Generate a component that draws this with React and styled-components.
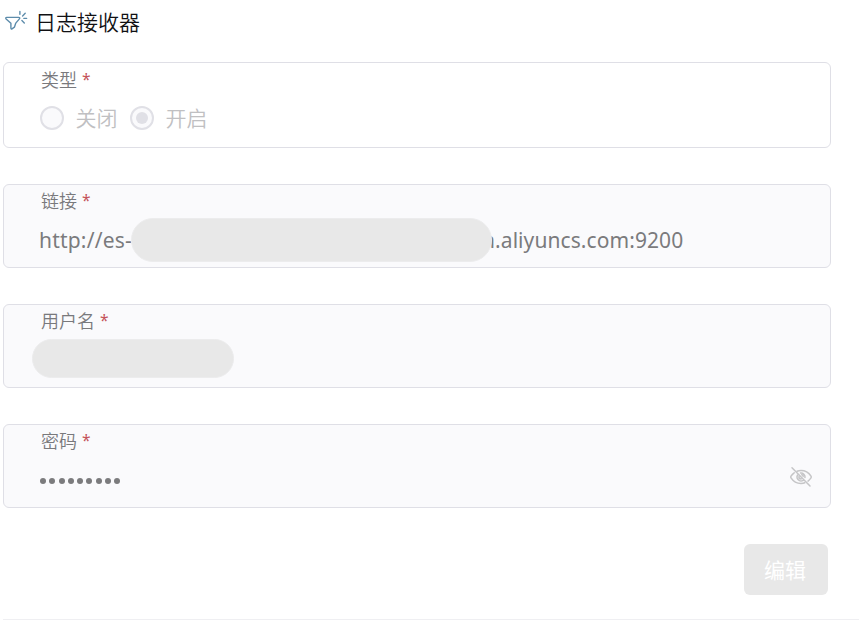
import React from "react";
import styled, { createGlobalStyle } from "styled-components";

const GlobalStyle = createGlobalStyle`
  *, *::before, *::after { box-sizing: border-box; }
  html, body { margin: 0; background: #fff; }
  body {
    overflow: hidden;
    font-family: "Noto Sans", "Noto Sans CJK SC", sans-serif;
  }
`;

const Page = styled.main`
  width: 859px;
  height: 623px;
  padding-left: 3px;
`;

const Header = styled.header`
  display: flex;
  align-items: flex-start;
  height: 62px;
`;

const HeaderIcon = styled.svg`
  width: 26px;
  height: 24px;
  margin: 9px 6px 0 0;
  fill: none;
  stroke: #5d8cab;
  stroke-width: 1.4;
  stroke-linecap: round;
  stroke-linejoin: round;
`;

const Title = styled.h1`
  margin: 6px 0 0;
  font: 350 21px/30px "Noto Sans CJK SC", sans-serif;
  color: #111114;
`;

const Form = styled.form`
  display: flex;
  flex-direction: column;
  gap: 36px;
  width: 828px;
`;

const Field = styled.div`
  position: relative;
  display: flex;
  flex-direction: column;
  height: ${(p) => (p.$plain ? 86 : 84)}px;
  padding: ${(p) => (p.$plain ? 3 : 2)}px 17px 0 37px;
  border: 1px solid #dfdfe6;
  border-radius: 6px;
  background: ${(p) => (p.$plain ? "#fff" : "#fafafc")};
`;

const Label = styled.label`
  display: flex;
  gap: 5px;
  height: 27px;
  font: 350 18px/27px "Noto Sans CJK SC", sans-serif;
  color: #79797c;
`;

const Required = styled.span`
  font-family: "Noto Sans", sans-serif;
  font-weight: 400;
  font-size: 15.5px;
  color: #c4525a;
`;

const Options = styled.div`
  display: flex;
  align-items: center;
  height: 50px;
  margin-left: -1px;
`;

const Option = styled.span`
  display: flex;
  align-items: center;
  gap: 11.5px;
  width: 90px;
  font: 350 21px/30px "Noto Sans CJK SC", sans-serif;
  color: #c0c0c2;
  white-space: nowrap;
`;

const OptionText = styled.span`
  margin-top: -2px;
`;

const Radio = styled.span`
  display: grid;
  place-items: center;
  width: 24px;
  height: 24px;
  border: 2px solid #e0e0e6;
  border-radius: 50%;
  background: #fafafc;

  &::after {
    content: "";
    width: 12px;
    height: 12px;
    border-radius: 50%;
    background: ${(p) => (p.$checked ? "#e0e0e6" : "transparent")};
  }
`;

const Value = styled.div`
  display: flex;
  align-items: center;
  height: 52px;
  margin-left: -2px;
  font-size: 21px;
  line-height: 30px;
  color: #7b7b7d;
`;

const UrlStart = styled.span`
  width: 443px;
  letter-spacing: 0.2px;
`;

const UrlEnd = styled.span`
  letter-spacing: 0.08px;
`;

const Mask = styled.span`
  position: absolute;
  left: ${(p) => p.$left}px;
  top: ${(p) => p.$top}px;
  width: ${(p) => p.$width}px;
  height: ${(p) => p.$height}px;
  border: 1px solid #ececed;
  border-radius: 22px;
  background: #e8e8e8;
`;

const PasswordRow = styled.div`
  display: flex;
  align-items: center;
  justify-content: space-between;
  height: 48px;
  margin-left: -1px;
`;

const Dots = styled.span`
  display: flex;
  gap: 3.3px;
  padding-top: 5px;
`;

const Dot = styled.i`
  width: 6px;
  height: 6px;
  border-radius: 50%;
  background: #7b7b7d;
`;

const EyeOff = styled.svg`
  width: 24px;
  height: 24px;
  margin-top: -3px;
  fill: none;
  stroke: #c5c5c7;
  stroke-width: 1.5;
  stroke-linecap: round;
  stroke-linejoin: round;
`;

const Actions = styled.div`
  display: flex;
  justify-content: flex-end;
  padding-right: 3px;
`;

const EditButton = styled.button`
  width: 84px;
  height: 51px;
  padding: 0 2px 2px 0;
  border: 0;
  border-radius: 6px;
  background: #e8e8e8;
  color: #fff;
  font: 400 21px/30px "Noto Sans CJK SC", sans-serif;
`;

const Divider = styled.hr`
  height: 1px;
  margin: 24px 0 0;
  border: 0;
  background: #efeff2;
`;

function FieldLabel({ children }) {
  return (
    <Label>
      {children}
      <Required>*</Required>
    </Label>
  );
}

export default function App() {
  return (
    <>
      <GlobalStyle />
      <Page>
        <Header>
          <HeaderIcon viewBox="0 0 26 24">
            <path d="M3.8 8.4H15.7C16.8 8.4 17.1 9.1 16.4 9.9L12.8 14.1L11.4 18.2L9 19.8C8.3 20.2 7.9 19.9 7.9 19.1V14.2L3.1 9.9C2.4 9.2 2.8 8.4 3.8 8.4Z" />
            <path d="M16.9 2.4V5.2M19.6 6.9L22.2 4.3M20.9 9.4H23.6M18.9 11.6L21.3 13.9" />
          </HeaderIcon>
          <Title>日志接收器</Title>
        </Header>
        <Form>
          <Field $plain>
            <FieldLabel>类型</FieldLabel>
            <Options>
              <Option><Radio /><OptionText>关闭</OptionText></Option>
              <Option><Radio $checked /><OptionText>开启</OptionText></Option>
            </Options>
          </Field>
          <Field>
            <FieldLabel>链接</FieldLabel>
            <Value>
              <UrlStart>http://es-</UrlStart>
              <UrlEnd>n.aliyuncs.com:9200</UrlEnd>
            </Value>
            <Mask $left={127} $top={33} $width={361} $height={44} />
          </Field>
          <Field>
            <FieldLabel>用户名</FieldLabel>
            <Mask $left={28} $top={34} $width={202} $height={39} />
          </Field>
          <Field>
            <FieldLabel>密码</FieldLabel>
            <PasswordRow>
              <Dots>
                {Array.from({ length: 9 }, (_, i) => <Dot key={i} />)}
              </Dots>
              <EyeOff viewBox="0 0 24 24">
                <path d="M8 6.3C9.2 5.8 10.5 5.5 12 5.5C17 5.5 20.3 8.5 22 11.1C22.4 11.7 22.4 12.3 22 12.9C21.2 14.1 20.2 15.2 19 16.1M15.8 17.8C14.7 18.3 13.4 18.5 12 18.5C7 18.5 3.7 15.5 2 12.9C1.6 12.3 1.6 11.7 2 11.1C2.8 9.9 3.9 8.7 5.2 7.8" />
                <path d="M11.5 8C14.1 7.7 16.3 9.9 16 12.5M8.6 10C7.4 12 8 14.2 10 15.4C11.3 16.2 13 16.1 14.2 15.4M12.7 9.8C13.5 10 14.1 10.6 14.2 11.4M9.9 11.8C9.9 13 10.9 14 12.1 14M3 2.8L21 21" />
              </EyeOff>
            </PasswordRow>
          </Field>
          <Actions>
            <EditButton type="button" disabled>编辑</EditButton>
          </Actions>
        </Form>
        <Divider />
      </Page>
    </>
  );
}
